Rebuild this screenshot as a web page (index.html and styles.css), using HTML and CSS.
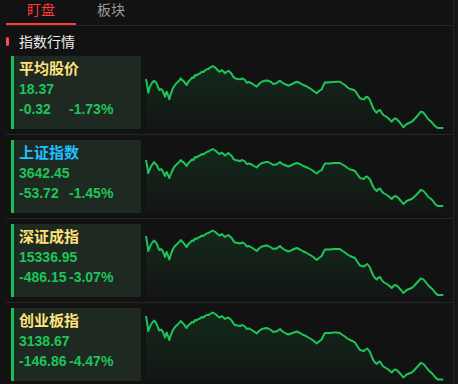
FILE: index.html
```html
<!DOCTYPE html>
<html lang="zh-CN">
<head>
    <meta charset="UTF-8">
    <title>盯盘</title>
    <link rel="stylesheet" href="styles.css">
</head>
<body>
    <div class="app">
        <div class="main">
            <div class="tabs">
                <div class="tab active">盯盘</div>
                <div class="tab">板块</div>
            </div>
            <div class="section-title"><span class="marker"></span>指数行情</div>

            <div class="row">
                <div class="card">
                    <div class="name">平均股价</div>
                    <div class="price">18.37</div>
                    <div class="change"><span class="diff">-0.32</span><span>-1.73%</span></div>
                </div>
                <svg class="chart" viewBox="0 0 300 73" preserveAspectRatio="none">
                    <defs>
                        <linearGradient id="fill1" x1="0" y1="0" x2="0" y2="1">
                            <stop offset="0" stop-color="#1ec45a" stop-opacity="0.13"/>
                            <stop offset="1" stop-color="#1ec45a" stop-opacity="0.02"/>
                        </linearGradient>
                    </defs>
                    <path class="area" fill="url(#fill1)" d="M0 23 L1.3 30 L2.3 36.7 L3.5 32 L4.7 29 L6 27 L8 24.7 L9.5 26 L10.7 27.3 L12 31 L13.3 34 L15 33 L16.7 34.7 L17.5 37 L19 40.7 L20 37 L20.7 35.7 L22 39 L23.3 43.3 L24.5 39 L25.7 35.7 L27 32 L29 29 L30.5 27 L32.3 25.7 L33.5 24 L34.7 22.3 L36 24 L37.3 24.7 L39 27 L40.7 29 L42 26 L44 24 L46 21.5 L47.5 22 L49 19 L50.5 19.5 L52.3 18 L54 17.5 L55.7 15.7 L57.5 16 L59 14.5 L60.7 13.3 L62.5 13 L64 11.5 L66.7 10 L68.5 11 L70 12.3 L71.5 14 L73.3 15.7 L74.5 15 L75.7 14 L77.5 15.5 L79 17.3 L80.5 16 L82.3 14.7 L84 16 L85.7 18 L87.5 21 L89 22.3 L91.5 23 L94 23.3 L96.5 22.5 L99 24 L100.7 26.7 L103 26 L105.7 27.3 L108 29 L110.7 30.7 L113 28 L115.7 25.7 L118 25 L120 24.5 L122.3 24.7 L125 26 L127.3 28 L129 27.5 L130.7 27.3 L132.5 25.5 L134 24.7 L135.5 26 L137.3 27.3 L140 28.5 L142.3 29.7 L145 28.5 L148 27 L150.7 25.7 L154 27 L157.3 29 L160 30 L162.3 31.3 L165 33 L167.3 34.7 L169 36 L170.7 37.3 L173 35 L175.7 33.3 L177 30 L179 26.3 L181.5 26.5 L184 26.3 L187 26 L190.7 25.7 L194 25.7 L196.5 27.5 L199 29 L201.5 31.5 L204 33 L206.5 33.5 L209 34.7 L211.5 38.5 L214 42.3 L216 43 L218 43.3 L219.5 41.5 L221.3 40.7 L222.5 42 L224 44 L225.5 48 L227.3 52.3 L229 55 L230.7 56.7 L232 55 L234 54 L235.5 56.5 L237.3 59 L240 60.5 L242.3 62.3 L244 64 L245.7 65.7 L247.5 63.5 L249 62.3 L250.5 63 L252.3 64.7 L255 68 L257.3 71.3 L259 69.5 L260.7 68 L263 67 L265.7 65.7 L268 63.5 L270.7 60.7 L273 58 L274.7 55.7 L276.5 56 L278 57.3 L280 60 L282.3 63.3 L284.5 65 L286.7 67.3 L289 70 L291.7 72 L294.5 72 L297.3 72 L297.3 73 L0 73 Z"/>
                    <path class="line" d="M0 23 L1.3 30 L2.3 36.7 L3.5 32 L4.7 29 L6 27 L8 24.7 L9.5 26 L10.7 27.3 L12 31 L13.3 34 L15 33 L16.7 34.7 L17.5 37 L19 40.7 L20 37 L20.7 35.7 L22 39 L23.3 43.3 L24.5 39 L25.7 35.7 L27 32 L29 29 L30.5 27 L32.3 25.7 L33.5 24 L34.7 22.3 L36 24 L37.3 24.7 L39 27 L40.7 29 L42 26 L44 24 L46 21.5 L47.5 22 L49 19 L50.5 19.5 L52.3 18 L54 17.5 L55.7 15.7 L57.5 16 L59 14.5 L60.7 13.3 L62.5 13 L64 11.5 L66.7 10 L68.5 11 L70 12.3 L71.5 14 L73.3 15.7 L74.5 15 L75.7 14 L77.5 15.5 L79 17.3 L80.5 16 L82.3 14.7 L84 16 L85.7 18 L87.5 21 L89 22.3 L91.5 23 L94 23.3 L96.5 22.5 L99 24 L100.7 26.7 L103 26 L105.7 27.3 L108 29 L110.7 30.7 L113 28 L115.7 25.7 L118 25 L120 24.5 L122.3 24.7 L125 26 L127.3 28 L129 27.5 L130.7 27.3 L132.5 25.5 L134 24.7 L135.5 26 L137.3 27.3 L140 28.5 L142.3 29.7 L145 28.5 L148 27 L150.7 25.7 L154 27 L157.3 29 L160 30 L162.3 31.3 L165 33 L167.3 34.7 L169 36 L170.7 37.3 L173 35 L175.7 33.3 L177 30 L179 26.3 L181.5 26.5 L184 26.3 L187 26 L190.7 25.7 L194 25.7 L196.5 27.5 L199 29 L201.5 31.5 L204 33 L206.5 33.5 L209 34.7 L211.5 38.5 L214 42.3 L216 43 L218 43.3 L219.5 41.5 L221.3 40.7 L222.5 42 L224 44 L225.5 48 L227.3 52.3 L229 55 L230.7 56.7 L232 55 L234 54 L235.5 56.5 L237.3 59 L240 60.5 L242.3 62.3 L244 64 L245.7 65.7 L247.5 63.5 L249 62.3 L250.5 63 L252.3 64.7 L255 68 L257.3 71.3 L259 69.5 L260.7 68 L263 67 L265.7 65.7 L268 63.5 L270.7 60.7 L273 58 L274.7 55.7 L276.5 56 L278 57.3 L280 60 L282.3 63.3 L284.5 65 L286.7 67.3 L289 70 L291.7 72 L294.5 72 L297.3 72"/>
                </svg>
            </div>

            <div class="row">
                <div class="card">
                    <div class="name blue">上证指数</div>
                    <div class="price">3642.45</div>
                    <div class="change"><span class="diff">-53.72</span><span>-1.45%</span></div>
                </div>
                <svg class="chart" viewBox="0 0 300 73" preserveAspectRatio="none">
                    <defs>
                        <linearGradient id="fill2" x1="0" y1="0" x2="0" y2="1">
                            <stop offset="0" stop-color="#1ec45a" stop-opacity="0.13"/>
                            <stop offset="1" stop-color="#1ec45a" stop-opacity="0.02"/>
                        </linearGradient>
                    </defs>
                    <path class="area" fill="url(#fill2)" d="M0 20 L1.3 27 L2.3 33 L3.5 30 L4.7 27 L6 25 L8 22 L9.5 24 L10.7 25 L12 28 L13.3 30 L15 29 L16.7 31 L17.5 33 L19 36 L20 33 L20.7 32 L22 35 L23.3 38 L24.5 35 L25.7 32 L27 29 L29 26 L30.5 24.5 L32.3 23 L33.5 21.5 L34.7 20 L36 21.5 L37.3 22 L39 24 L40.7 26 L42 23.5 L44 21.5 L46 19.5 L47.5 20 L49 17 L50.5 17.5 L52.3 16 L54 15.5 L55.7 14 L57.5 14.5 L59 13 L60.7 12 L62.5 11.5 L64 10.5 L66.7 9 L68.5 10 L70 11 L71.5 12.5 L73.3 14 L74.5 13.5 L75.7 12.5 L77.5 14 L79 15.5 L80.5 14.5 L82.3 13 L84 14.5 L85.7 16 L87.5 19 L89 20 L91.5 20.5 L94 21 L96.5 20 L99 21.5 L100.7 24 L103 23.5 L105.7 24.5 L108 26 L110.7 27.5 L113 25 L115.7 23 L118 22.5 L120 22 L122.3 22 L125 23.5 L127.3 25 L129 24.5 L130.7 24.5 L132.5 23 L134 22 L135.5 23.5 L137.3 24.5 L140 25.5 L142.3 26.5 L145 25.5 L148 24 L150.7 23 L154 24 L157.3 26 L160 27 L162.3 28 L165 29.5 L167.3 31 L169 32.5 L170.7 33.5 L173 31.5 L175.7 30 L177 27 L179 23.5 L181.5 23.5 L184 23.5 L187 23 L190.7 23 L194 23 L196.5 24.5 L199 26 L201.5 28 L204 29.5 L206.5 30 L209 31 L211.5 34.5 L214 38 L216 38.5 L218 39 L219.5 37 L221.3 36.5 L222.5 38 L224 39.5 L225.5 43 L227.3 47 L229 49.5 L230.7 51 L232 49.5 L234 48.5 L235.5 51 L237.3 53 L240 54.5 L242.3 56 L244 57.5 L245.7 59 L247.5 57 L249 56 L250.5 56.5 L252.3 58 L255 61 L257.3 64 L259 62.5 L260.7 61 L263 60 L265.7 59 L268 57 L270.7 54.5 L273 52 L274.7 50 L276.5 50.5 L278 51.5 L280 54 L282.3 57 L284.5 58.5 L286.7 60.5 L289 64 L291.7 66 L294.5 66 L297.3 66 L297.3 73 L0 73 Z"/>
                    <path class="line" d="M0 20 L1.3 27 L2.3 33 L3.5 30 L4.7 27 L6 25 L8 22 L9.5 24 L10.7 25 L12 28 L13.3 30 L15 29 L16.7 31 L17.5 33 L19 36 L20 33 L20.7 32 L22 35 L23.3 38 L24.5 35 L25.7 32 L27 29 L29 26 L30.5 24.5 L32.3 23 L33.5 21.5 L34.7 20 L36 21.5 L37.3 22 L39 24 L40.7 26 L42 23.5 L44 21.5 L46 19.5 L47.5 20 L49 17 L50.5 17.5 L52.3 16 L54 15.5 L55.7 14 L57.5 14.5 L59 13 L60.7 12 L62.5 11.5 L64 10.5 L66.7 9 L68.5 10 L70 11 L71.5 12.5 L73.3 14 L74.5 13.5 L75.7 12.5 L77.5 14 L79 15.5 L80.5 14.5 L82.3 13 L84 14.5 L85.7 16 L87.5 19 L89 20 L91.5 20.5 L94 21 L96.5 20 L99 21.5 L100.7 24 L103 23.5 L105.7 24.5 L108 26 L110.7 27.5 L113 25 L115.7 23 L118 22.5 L120 22 L122.3 22 L125 23.5 L127.3 25 L129 24.5 L130.7 24.5 L132.5 23 L134 22 L135.5 23.5 L137.3 24.5 L140 25.5 L142.3 26.5 L145 25.5 L148 24 L150.7 23 L154 24 L157.3 26 L160 27 L162.3 28 L165 29.5 L167.3 31 L169 32.5 L170.7 33.5 L173 31.5 L175.7 30 L177 27 L179 23.5 L181.5 23.5 L184 23.5 L187 23 L190.7 23 L194 23 L196.5 24.5 L199 26 L201.5 28 L204 29.5 L206.5 30 L209 31 L211.5 34.5 L214 38 L216 38.5 L218 39 L219.5 37 L221.3 36.5 L222.5 38 L224 39.5 L225.5 43 L227.3 47 L229 49.5 L230.7 51 L232 49.5 L234 48.5 L235.5 51 L237.3 53 L240 54.5 L242.3 56 L244 57.5 L245.7 59 L247.5 57 L249 56 L250.5 56.5 L252.3 58 L255 61 L257.3 64 L259 62.5 L260.7 61 L263 60 L265.7 59 L268 57 L270.7 54.5 L273 52 L274.7 50 L276.5 50.5 L278 51.5 L280 54 L282.3 57 L284.5 58.5 L286.7 60.5 L289 64 L291.7 66 L294.5 66 L297.3 66"/>
                </svg>
            </div>

            <div class="row">
                <div class="card">
                    <div class="name">深证成指</div>
                    <div class="price">15336.95</div>
                    <div class="change"><span class="diff">-486.15</span><span>-3.07%</span></div>
                </div>
                <svg class="chart" viewBox="0 0 300 73" preserveAspectRatio="none">
                    <defs>
                        <linearGradient id="fill3" x1="0" y1="0" x2="0" y2="1">
                            <stop offset="0" stop-color="#1ec45a" stop-opacity="0.13"/>
                            <stop offset="1" stop-color="#1ec45a" stop-opacity="0.02"/>
                        </linearGradient>
                    </defs>
                    <path class="area" fill="url(#fill3)" d="M0 12 L1.3 20 L2.3 27 L3.5 24 L4.7 21 L6 19 L8 16.5 L9.5 18 L10.7 19.5 L12 23 L13.3 26 L15 25 L16.7 27 L17.5 29 L19 33 L20 29.5 L20.7 28 L22 31.5 L23.3 35.5 L24.5 31.5 L25.7 28 L27 25 L29 22 L30.5 20.5 L32.3 19 L33.5 17.5 L34.7 16 L36 17.5 L37.3 18.5 L39 21 L40.7 23 L42 20.5 L44 18.5 L46 16.5 L47.5 17 L49 14.5 L50.5 15 L52.3 13.5 L54 13 L55.7 11.5 L57.5 12 L59 10.5 L60.7 9.5 L62.5 9 L64 8 L66.7 6.5 L68.5 7.5 L70 8.5 L71.5 10 L73.3 11.5 L74.5 11 L75.7 10 L77.5 11.5 L79 13 L80.5 12 L82.3 11 L84 12.5 L85.7 14 L87.5 17 L89 18.5 L91.5 19 L94 19.5 L96.5 18.5 L99 20 L100.7 22.5 L103 22 L105.7 23.5 L108 25 L110.7 27 L113 24.5 L115.7 22.5 L118 22 L120 21.5 L122.3 22 L125 23.5 L127.3 25 L129 24.5 L130.7 24.5 L132.5 23 L134 22 L135.5 23.5 L137.3 25 L140 26.5 L142.3 27.5 L145 26.5 L148 25 L150.7 24 L154 25.5 L157.3 27.5 L160 28.5 L162.3 30 L165 31.5 L167.3 33 L169 34.5 L170.7 36 L173 34 L175.7 32 L177 29 L179 25.5 L181.5 25.5 L184 25.5 L187 25 L190.7 25 L194 25 L196.5 27 L199 28.5 L201.5 30.5 L204 32 L206.5 33 L209 34 L211.5 38 L214 41.5 L216 42 L218 42.5 L219.5 41 L221.3 40 L222.5 41.5 L224 43.5 L225.5 47.5 L227.3 51.5 L229 54 L230.7 55.5 L232 54 L234 53 L235.5 55.5 L237.3 58 L240 59.5 L242.3 61 L244 62.5 L245.7 64 L247.5 62 L249 61 L250.5 61.5 L252.3 63 L255 66 L257.3 69 L259 67.5 L260.7 66 L263 65 L265.7 64 L268 62 L270.7 59 L273 56.5 L274.7 54.5 L276.5 55 L278 56 L280 58.5 L282.3 61.5 L284.5 63.5 L286.7 65.5 L289 68.5 L291.7 71 L294.5 71 L297.3 71 L297.3 73 L0 73 Z"/>
                    <path class="line" d="M0 12 L1.3 20 L2.3 27 L3.5 24 L4.7 21 L6 19 L8 16.5 L9.5 18 L10.7 19.5 L12 23 L13.3 26 L15 25 L16.7 27 L17.5 29 L19 33 L20 29.5 L20.7 28 L22 31.5 L23.3 35.5 L24.5 31.5 L25.7 28 L27 25 L29 22 L30.5 20.5 L32.3 19 L33.5 17.5 L34.7 16 L36 17.5 L37.3 18.5 L39 21 L40.7 23 L42 20.5 L44 18.5 L46 16.5 L47.5 17 L49 14.5 L50.5 15 L52.3 13.5 L54 13 L55.7 11.5 L57.5 12 L59 10.5 L60.7 9.5 L62.5 9 L64 8 L66.7 6.5 L68.5 7.5 L70 8.5 L71.5 10 L73.3 11.5 L74.5 11 L75.7 10 L77.5 11.5 L79 13 L80.5 12 L82.3 11 L84 12.5 L85.7 14 L87.5 17 L89 18.5 L91.5 19 L94 19.5 L96.5 18.5 L99 20 L100.7 22.5 L103 22 L105.7 23.5 L108 25 L110.7 27 L113 24.5 L115.7 22.5 L118 22 L120 21.5 L122.3 22 L125 23.5 L127.3 25 L129 24.5 L130.7 24.5 L132.5 23 L134 22 L135.5 23.5 L137.3 25 L140 26.5 L142.3 27.5 L145 26.5 L148 25 L150.7 24 L154 25.5 L157.3 27.5 L160 28.5 L162.3 30 L165 31.5 L167.3 33 L169 34.5 L170.7 36 L173 34 L175.7 32 L177 29 L179 25.5 L181.5 25.5 L184 25.5 L187 25 L190.7 25 L194 25 L196.5 27 L199 28.5 L201.5 30.5 L204 32 L206.5 33 L209 34 L211.5 38 L214 41.5 L216 42 L218 42.5 L219.5 41 L221.3 40 L222.5 41.5 L224 43.5 L225.5 47.5 L227.3 51.5 L229 54 L230.7 55.5 L232 54 L234 53 L235.5 55.5 L237.3 58 L240 59.5 L242.3 61 L244 62.5 L245.7 64 L247.5 62 L249 61 L250.5 61.5 L252.3 63 L255 66 L257.3 69 L259 67.5 L260.7 66 L263 65 L265.7 64 L268 62 L270.7 59 L273 56.5 L274.7 54.5 L276.5 55 L278 56 L280 58.5 L282.3 61.5 L284.5 63.5 L286.7 65.5 L289 68.5 L291.7 71 L294.5 71 L297.3 71"/>
                </svg>
            </div>

            <div class="row">
                <div class="card">
                    <div class="name">创业板指</div>
                    <div class="price">3138.67</div>
                    <div class="change"><span class="diff">-146.86</span><span>-4.47%</span></div>
                </div>
                <svg class="chart" viewBox="0 0 300 73" preserveAspectRatio="none">
                    <defs>
                        <linearGradient id="fill4" x1="0" y1="0" x2="0" y2="1">
                            <stop offset="0" stop-color="#1ec45a" stop-opacity="0.13"/>
                            <stop offset="1" stop-color="#1ec45a" stop-opacity="0.02"/>
                        </linearGradient>
                    </defs>
                    <path class="area" fill="url(#fill4)" d="M0 8 L1.3 16 L2.3 23 L3.5 20 L4.7 17 L6 15 L8 12.5 L9.5 14 L10.7 16 L12 19.5 L13.3 22.5 L15 21.5 L16.7 23.5 L17.5 25.5 L19 29.5 L20 26 L20.7 24.5 L22 28 L23.3 32 L24.5 28 L25.7 25 L27 22 L29 19 L30.5 17.5 L32.3 16 L33.5 14.5 L34.7 13 L36 14.5 L37.3 15.5 L39 18 L40.7 20 L42 17.5 L44 16 L46 14 L47.5 14.5 L49 12 L50.5 12.5 L52.3 11 L54 10.5 L55.7 9 L57.5 9.5 L59 8 L60.7 7 L62.5 7 L64 6 L66.7 4.5 L68.5 5.5 L70 6.5 L71.5 8 L73.3 9.5 L74.5 9 L75.7 8 L77.5 9.5 L79 11 L80.5 10 L82.3 9.5 L84 11 L85.7 12.5 L87.5 15.5 L89 17 L91.5 17.5 L94 18 L96.5 17 L99 18.5 L100.7 21 L103 20.5 L105.7 22 L108 23.5 L110.7 25.5 L113 23 L115.7 21 L118 20.5 L120 20 L122.3 20.5 L125 22 L127.3 24 L129 23.5 L130.7 23.5 L132.5 22 L134 21 L135.5 22.5 L137.3 24 L140 25.5 L142.3 26.5 L145 25.5 L148 24.5 L150.7 23.5 L154 25 L157.3 27 L160 28 L162.3 29.5 L165 31 L167.3 32.5 L169 34 L170.7 35.5 L173 33.5 L175.7 31.5 L177 28.5 L179 25 L181.5 25 L184 25 L187 24.5 L190.7 24.5 L194 25 L196.5 27 L199 28.5 L201.5 30.5 L204 32 L206.5 33 L209 34.5 L211.5 38.5 L214 42 L216 42.5 L218 43 L219.5 41.5 L221.3 40.5 L222.5 42 L224 44 L225.5 48 L227.3 52 L229 54.5 L230.7 56 L232 54.5 L234 53.5 L235.5 56 L237.3 58.5 L240 60 L242.3 61.5 L244 63 L245.7 64.5 L247.5 62.5 L249 61.5 L250.5 62 L252.3 63.5 L255 66.5 L257.3 69.5 L259 68 L260.7 66.5 L263 65.5 L265.7 64.5 L268 62.5 L270.7 59.5 L273 57 L274.7 55 L276.5 55.5 L278 56.5 L280 59 L282.3 62 L284.5 64 L286.7 66 L289 69 L291.7 71.5 L294.5 71.5 L297.3 71.5 L297.3 73 L0 73 Z"/>
                    <path class="line" d="M0 8 L1.3 16 L2.3 23 L3.5 20 L4.7 17 L6 15 L8 12.5 L9.5 14 L10.7 16 L12 19.5 L13.3 22.5 L15 21.5 L16.7 23.5 L17.5 25.5 L19 29.5 L20 26 L20.7 24.5 L22 28 L23.3 32 L24.5 28 L25.7 25 L27 22 L29 19 L30.5 17.5 L32.3 16 L33.5 14.5 L34.7 13 L36 14.5 L37.3 15.5 L39 18 L40.7 20 L42 17.5 L44 16 L46 14 L47.5 14.5 L49 12 L50.5 12.5 L52.3 11 L54 10.5 L55.7 9 L57.5 9.5 L59 8 L60.7 7 L62.5 7 L64 6 L66.7 4.5 L68.5 5.5 L70 6.5 L71.5 8 L73.3 9.5 L74.5 9 L75.7 8 L77.5 9.5 L79 11 L80.5 10 L82.3 9.5 L84 11 L85.7 12.5 L87.5 15.5 L89 17 L91.5 17.5 L94 18 L96.5 17 L99 18.5 L100.7 21 L103 20.5 L105.7 22 L108 23.5 L110.7 25.5 L113 23 L115.7 21 L118 20.5 L120 20 L122.3 20.5 L125 22 L127.3 24 L129 23.5 L130.7 23.5 L132.5 22 L134 21 L135.5 22.5 L137.3 24 L140 25.5 L142.3 26.5 L145 25.5 L148 24.5 L150.7 23.5 L154 25 L157.3 27 L160 28 L162.3 29.5 L165 31 L167.3 32.5 L169 34 L170.7 35.5 L173 33.5 L175.7 31.5 L177 28.5 L179 25 L181.5 25 L184 25 L187 24.5 L190.7 24.5 L194 25 L196.5 27 L199 28.5 L201.5 30.5 L204 32 L206.5 33 L209 34.5 L211.5 38.5 L214 42 L216 42.5 L218 43 L219.5 41.5 L221.3 40.5 L222.5 42 L224 44 L225.5 48 L227.3 52 L229 54.5 L230.7 56 L232 54.5 L234 53.5 L235.5 56 L237.3 58.5 L240 60 L242.3 61.5 L244 63 L245.7 64.5 L247.5 62.5 L249 61.5 L250.5 62 L252.3 63.5 L255 66.5 L257.3 69.5 L259 68 L260.7 66.5 L263 65.5 L265.7 64.5 L268 62.5 L270.7 59.5 L273 57 L274.7 55 L276.5 55.5 L278 56.5 L280 59 L282.3 62 L284.5 64 L286.7 66 L289 69 L291.7 71.5 L294.5 71.5 L297.3 71.5"/>
                </svg>
            </div>
        </div>
        <div class="edge"></div>
    </div>
</body>
</html>
```

FILE: styles.css
```css
html,
body {
    margin: 0;
    height: 100%;
    background-color: #121212;
    overflow: hidden;
}

body {
    font-family: 'Liberation Sans', 'Noto Sans CJK SC', sans-serif;
    color: #e6e6e6;
}

.app {
    display: flex;
    height: 100%;
}

.main {
    flex: 1;
    padding-left: 6px;
}

/* right hand strip with faint ticks */
.edge {
    width: 4px;
    border-left: 1px solid #262626;
    background-color: #151515;
    background-image: repeating-linear-gradient(to bottom,
            transparent 0, transparent 71px,
            #2c2c2c 71px, #2c2c2c 72px,
            transparent 72px, transparent 94px);
    background-size: 100% 23px;
    background-position: 0 2px;
}

.tabs {
    display: flex;
    border-bottom: 1px solid #262626;
}

.tab {
    width: 70px;
    height: 23px;
    line-height: 20px;
    text-align: center;
    font-size: 14px;
    color: #9a9a9a;
    border-bottom: 2px solid transparent;
}

.tab.active {
    color: #ff3b3b;
    border-bottom-color: #ff3b3b;
}

.section-title {
    display: flex;
    align-items: center;
    height: 20px;
    padding-top: 5px;
    font-size: 14px;
    color: #ececec;
}

.marker {
    width: 3px;
    height: 9px;
    border-radius: 1.5px;
    background-color: #ff4d4d;
    margin-right: 10px;
}

.row {
    display: flex;
    align-items: flex-start;
    padding: 5px 0;
    border-bottom: 1px solid #262626;
}

.card {
    width: 122px;
    height: 70px;
    margin-left: 5px;
    padding: 3px 0 0 5px;
    background-color: #1e2922;
    border-left: 3px solid #19c155;
    box-sizing: content-box;
}

.name {
    font-size: 15px;
    font-weight: bold;
    line-height: 20px;
    color: #ffe27a;
}

.name.blue {
    color: #1ec0ff;
}

.price,
.change {
    font-size: 14px;
    font-weight: bold;
    line-height: 20px;
    color: #1ec45a;
}

.change {
    display: flex;
}

.diff {
    min-width: 50px;
}

.chart {
    width: 300px;
    height: 73px;
    margin-left: 5px;
    overflow: visible;
}

.line {
    fill: none;
    stroke: #1ec45a;
    stroke-width: 2;
    stroke-linejoin: round;
    vector-effect: non-scaling-stroke;
}
```
